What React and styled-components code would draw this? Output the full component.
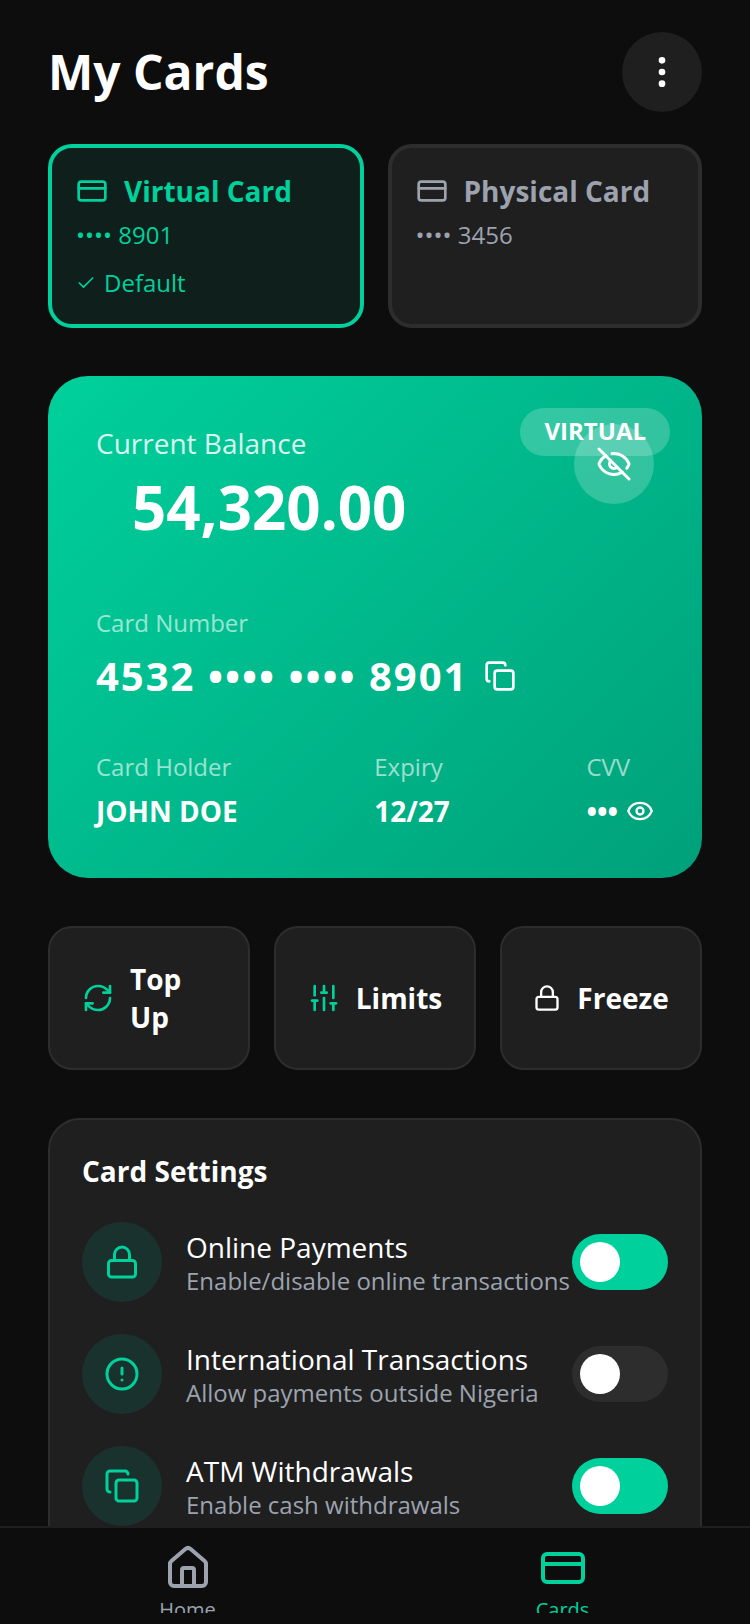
import styled, { createGlobalStyle } from "styled-components";
import {
  AlertCircle,
  Check,
  Copy,
  CreditCard,
  Eye,
  EyeOff,
  Home,
  Lock,
  MoreVertical,
  RefreshCw,
  SlidersVertical,
} from "lucide-react";

const GREEN = "#00d09c";

const GlobalStyle = createGlobalStyle`
  * {
    box-sizing: border-box;
  }

  html,
  body {
    margin: 0;
    height: 100%;
    overflow: hidden;
    background: #0d0d0d;
    font-family: "Open Sans", "Noto Sans", sans-serif;
    color: #fff;
  }
`;

const Page = styled.div`
  height: 1624px;
  overflow: hidden;
  display: flex;
  flex-direction: column;
  padding: 32px 48px 0;
  background: #0d0d0d;
`;

const Header = styled.header`
  display: flex;
  align-items: center;
  justify-content: space-between;
  margin-bottom: 32px;
`;

const Title = styled.h1`
  margin: 0;
  font-size: 48px;
  line-height: 80px;
  font-weight: 700;
`;

const RoundButton = styled.button`
  width: 80px;
  height: 80px;
  padding: 0;
  border: 0;
  border-radius: 50%;
  background: #1f1f1f;
  color: #fff;
  display: flex;
  align-items: center;
  justify-content: center;
`;

const Tabs = styled.div`
  display: grid;
  grid-template-columns: 315.5fr 314.5fr;
  gap: 24px;
  margin-bottom: 48px;
`;

const Tab = styled.div`
  height: 184px;
  min-width: 0;
  padding: 25px 24px;
  border-radius: 24px;
  border: 4px solid ${(p) => (p.$active ? GREEN : "#2d2d2d")};
  background: ${(p) => (p.$active ? "#0f201c" : "#1f1f1f")};
  color: ${(p) => (p.$active ? GREEN : "#9ca3af")};
`;

const TabHead = styled.div`
  display: flex;
  align-items: center;
  gap: 16px;
  font-size: 28px;
  line-height: 36px;
  font-weight: 700;
`;

const TabDigits = styled.div`
  margin-top: 8px;
  font-size: 24px;
  line-height: 36px;
`;

const DefaultTag = styled.div`
  display: flex;
  align-items: center;
  gap: 8px;
  margin-top: 12px;
  font-size: 24px;
  line-height: 36px;
`;

const BalanceCard = styled.section`
  position: relative;
  height: 502px;
  flex: none;
  padding: 48px;
  margin-bottom: 48px;
  border-radius: 40px;
  background: linear-gradient(135deg, #00d09c 0%, #00a07a 100%);
`;

const Badge = styled.div`
  position: absolute;
  top: 32px;
  right: 32px;
  padding: 7px 24px 9px;
  border-radius: 40px;
  background: rgba(255, 255, 255, 0.2);
  font-size: 24px;
  line-height: 32px;
  font-weight: 700;
`;

const EyeButton = styled.button`
  position: absolute;
  top: 48px;
  right: 48px;
  width: 80px;
  height: 80px;
  border: 0;
  border-radius: 50%;
  background: rgba(255, 255, 255, 0.2);
  color: #fff;
  display: flex;
  align-items: center;
  justify-content: center;
`;

const BalanceLabel = styled.div`
  margin-top: 1px;
  font-size: 28px;
  line-height: 36px;
  opacity: 0.85;
`;

const BalanceValue = styled.div`
  margin: 6px 0 0 36px;
  font-size: 60px;
  line-height: 80px;
  font-weight: 700;
`;

const FieldLabel = styled.div`
  font-size: 24px;
  line-height: 32px;
  opacity: 0.6;
`;

const NumberBlock = styled.div`
  margin-top: 60px;
`;

const NumberRow = styled.div`
  display: flex;
  align-items: center;
  gap: 16px;
  margin-top: 9px;
  font-size: 40px;
  line-height: 56px;
  font-weight: 700;
  letter-spacing: 2px;
`;

const Details = styled.div`
  display: flex;
  justify-content: space-between;
  margin-top: 47px;
`;

const DetailValue = styled.div`
  display: flex;
  align-items: center;
  gap: 8px;
  margin-top: 10px;
  font-size: 28px;
  line-height: 36px;
  font-weight: 700;
`;

const Actions = styled.div`
  display: grid;
  grid-template-columns: repeat(3, minmax(0, 1fr));
  gap: 24px;
  margin-bottom: 48px;
`;

const ActionButton = styled.button`
  height: 144px;
  padding: 0 32px;
  border: 2px solid #2d2d2d;
  border-radius: 24px;
  background: #1f1f1f;
  color: #fff;
  display: flex;
  align-items: center;
  justify-content: center;
  gap: 16px;
  font-family: inherit;
  font-size: 28px;
  font-weight: 700;
  text-align: left;

  svg {
    flex: none;
    color: ${(p) => (p.$accent ? GREEN : "#fff")};
  }
`;

const SettingsPanel = styled.section`
  flex: none;
  padding: 32px;
  border: 2px solid #2d2d2d;
  border-radius: 32px;
  background: #1f1f1f;
`;

const SettingsTitle = styled.h2`
  margin: 0 0 32px;
  font-size: 28px;
  line-height: 38px;
  font-weight: 700;
`;

const SettingsList = styled.div`
  display: flex;
  flex-direction: column;
  gap: 32px;
`;

const SettingRow = styled.div`
  display: flex;
  align-items: center;
  justify-content: space-between;
`;

const SettingMain = styled.div`
  display: flex;
  align-items: center;
  gap: 24px;
`;

const SettingIcon = styled.div`
  width: 80px;
  height: 80px;
  flex: none;
  border-radius: 50%;
  background: #1a322d;
  color: ${GREEN};
  display: flex;
  align-items: center;
  justify-content: center;
`;

const SettingText = styled.div`
  padding-top: 2px;
`;

const SettingName = styled.div`
  font-size: 28px;
  line-height: 35px;
`;

const SettingHint = styled.div`
  font-size: 24px;
  line-height: 32px;
  color: #9ca3af;
  white-space: nowrap;
`;

const Toggle = styled.div`
  position: relative;
  width: 96px;
  height: 56px;
  flex: none;
  border-radius: 28px;
  background: ${(p) => (p.$on ? GREEN : "#2d2d2d")};

  &::after {
    content: "";
    position: absolute;
    top: 8px;
    left: 8px;
    width: 40px;
    height: 40px;
    border-radius: 50%;
    background: #fff;
  }
`;

const BottomNav = styled.nav`
  position: fixed;
  left: 0;
  right: 0;
  bottom: 0;
  height: 98px;
  padding: 16px 0 11px;
  display: grid;
  grid-template-columns: 1fr 1fr;
  border-top: 2px solid #1f1f1f;
  background: #0d0d0d;
`;

const NavItem = styled.div`
  overflow: hidden;
  display: flex;
  flex-direction: column;
  align-items: center;
  gap: 4px;
  font-size: 20px;
  line-height: 28px;
  color: ${(p) => (p.$active ? GREEN : "#9ca3af")};

  svg {
    flex: none;
  }
`;

const settings = [
  { name: "Online Payments", hint: "Enable/disable online transactions", Icon: Lock, on: true },
  { name: "International Transactions", hint: "Allow payments outside Nigeria", Icon: AlertCircle, on: false },
  { name: "ATM Withdrawals", hint: "Enable cash withdrawals", Icon: Copy, on: true },
];

export default function App() {
  return (
    <>
      <GlobalStyle />
      <Page>
        <Header>
          <Title>My Cards</Title>
          <RoundButton>
            <MoreVertical size={40} />
          </RoundButton>
        </Header>

        <Tabs>
          <Tab $active>
            <TabHead>
              <CreditCard size={32} />
              Virtual Card
            </TabHead>
            <TabDigits>•••• 8901</TabDigits>
            <DefaultTag>
              <Check size={20} />
              Default
            </DefaultTag>
          </Tab>
          <Tab>
            <TabHead>
              <CreditCard size={32} />
              Physical Card
            </TabHead>
            <TabDigits>•••• 3456</TabDigits>
          </Tab>
        </Tabs>

        <BalanceCard>
          <EyeButton>
            <EyeOff size={36} />
          </EyeButton>
          <Badge>VIRTUAL</Badge>
          <BalanceLabel>Current Balance</BalanceLabel>
          <BalanceValue>54,320.00</BalanceValue>
          <NumberBlock>
            <FieldLabel>Card Number</FieldLabel>
            <NumberRow>
              4532 •••• •••• 8901
              <Copy size={32} />
            </NumberRow>
          </NumberBlock>
          <Details>
            <div>
              <FieldLabel>Card Holder</FieldLabel>
              <DetailValue>JOHN DOE</DetailValue>
            </div>
            <div>
              <FieldLabel>Expiry</FieldLabel>
              <DetailValue>12/27</DetailValue>
            </div>
            <div>
              <FieldLabel>CVV</FieldLabel>
              <DetailValue>
                •••
                <Eye size={28} />
              </DetailValue>
            </div>
          </Details>
        </BalanceCard>

        <Actions>
          <ActionButton $accent>
            <RefreshCw size={32} />
            Top Up
          </ActionButton>
          <ActionButton $accent>
            <SlidersVertical size={32} />
            Limits
          </ActionButton>
          <ActionButton>
            <Lock size={28} />
            Freeze
          </ActionButton>
        </Actions>

        <SettingsPanel>
          <SettingsTitle>Card Settings</SettingsTitle>
          <SettingsList>
            {settings.map(({ name, hint, Icon, on }) => (
              <SettingRow key={name}>
                <SettingMain>
                  <SettingIcon>
                    <Icon size={36} />
                  </SettingIcon>
                  <SettingText>
                    <SettingName>{name}</SettingName>
                    <SettingHint>{hint}</SettingHint>
                  </SettingText>
                </SettingMain>
                <Toggle $on={on} />
              </SettingRow>
            ))}
          </SettingsList>
        </SettingsPanel>
      </Page>

      <BottomNav>
        <NavItem>
          <Home size={48} />
          Home
        </NavItem>
        <NavItem $active>
          <CreditCard size={48} />
          Cards
        </NavItem>
      </BottomNav>
    </>
  );
}
